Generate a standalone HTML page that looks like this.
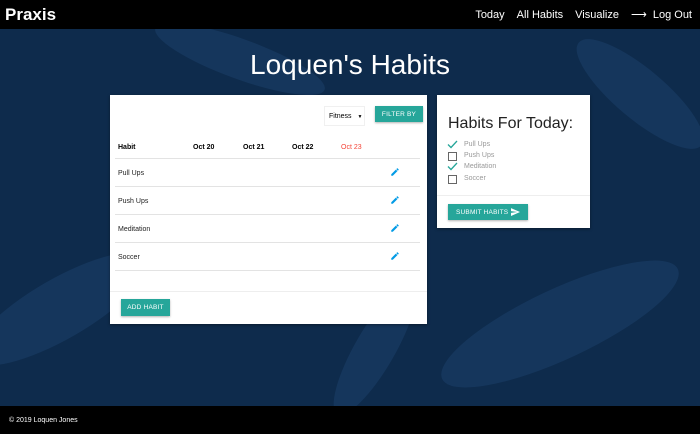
<!DOCTYPE html>
<html><head><meta charset="utf-8"><style>
*{margin:0;padding:0;box-sizing:border-box}
body{width:700px;height:434px;overflow:hidden;font-family:"Liberation Sans",sans-serif;background:#0e2b4c;position:relative}
.nav{position:absolute;top:0;left:0;width:700px;height:29px;background:#000;color:#fff}
.brand{position:absolute;left:5px;top:5px;font-size:17px;font-weight:bold}
.links{position:absolute;right:8px;top:8px;font-size:11px}
.links span{margin-left:12px}
.bg{position:absolute;top:29px;left:0;width:700px;height:377px;overflow:hidden}
.leaf{position:absolute;background:#1f4470;border-radius:50%;opacity:.45}
h1{position:absolute;top:49px;width:700px;text-align:center;color:#fff;font-weight:normal;font-size:28px}
.card{position:absolute;background:#fff;box-shadow:0 1px 3px rgba(0,0,0,.4)}
.btn{position:absolute;background:#26a69a;color:#fff;font-size:6.5px;text-align:center;letter-spacing:.2px;box-shadow:0 1px 2px rgba(0,0,0,.3)}
.row{position:absolute;left:5px;width:305px;border-bottom:1px solid #e3e3e3;font-size:7px;color:#222}
.row span{position:absolute;left:3px}
.pen{position:absolute;left:275px}
.hd{position:absolute;top:49px;font-size:7px;font-weight:bold}
.foot{position:absolute;bottom:0;left:0;width:700px;height:28px;background:#000;color:#fff;font-size:7px;padding:11px 0 0 9px}
.ci{position:absolute;left:11px;font-size:7px;color:#999}
.ci span{position:absolute;left:16px;top:0;white-space:nowrap}
.box{position:absolute;left:0;top:0;width:9px;height:9px;border:1.5px solid #666}
</style></head><body>
<div class="bg">
<div class="leaf" style="left:-40px;top:250px;width:200px;height:60px;transform:rotate(-30deg)"></div>
<div class="leaf" style="left:430px;top:260px;width:260px;height:70px;transform:rotate(-25deg)"></div>
<div class="leaf" style="left:560px;top:40px;width:160px;height:50px;transform:rotate(40deg)"></div>
<div class="leaf" style="left:150px;top:10px;width:180px;height:40px;transform:rotate(20deg)"></div>
<div class="leaf" style="left:300px;top:300px;width:150px;height:40px;transform:rotate(-60deg)"></div>
</div>
<div class="nav"><div class="brand">Praxis</div><div class="links"><span>Today</span><span>All Habits</span><span>Visualize</span><span>&#10230;&nbsp; Log Out</span></div></div>
<h1>Loquen's Habits</h1>
<div class="card" style="left:110px;top:95px;width:317px;height:229px">
<div style="position:absolute;left:214px;top:11px;width:41px;height:20px;border:1px solid #f0f0f0;font-size:7px;padding:6px 0 0 4px">Fitness <span style="font-size:5px;margin-left:4px">▼</span></div>
<div class="btn" style="left:265px;top:11px;width:48px;height:16px;padding-top:5px">FILTER BY</div>
<div class="hd" style="left:8px">Habit</div>
<div class="hd" style="left:83px">Oct 20</div>
<div class="hd" style="left:133px">Oct 21</div>
<div class="hd" style="left:182px">Oct 22</div>
<div class="hd" style="left:231px;color:#f44336;font-weight:normal">Oct 23</div>
<div class="row" style="top:36px;height:28px"></div>
<div class="row" style="top:64px;height:28px"><span style="top:11px">Pull Ups</span><svg class="pen" style="top:8px" width="10" height="10" viewBox="0 0 24 24"><path fill="#039be5" d="M3 17.25V21h3.75L17.8 9.94l-3.75-3.75L3 17.25zM20.7 7.04a1 1 0 000-1.41l-2.34-2.34a1 1 0 00-1.41 0l-1.830 1.83 3.75 3.75 1.83-1.83z"/></svg></div>
<div class="row" style="top:92px;height:28px"><span style="top:11px">Push Ups</span><svg class="pen" style="top:8px" width="10" height="10" viewBox="0 0 24 24"><path fill="#039be5" d="M3 17.25V21h3.75L17.8 9.94l-3.75-3.75L3 17.25zM20.7 7.04a1 1 0 000-1.41l-2.34-2.34a1 1 0 00-1.41 0l-1.83 1.83 3.75 3.75 1.83-1.83z"/></svg></div>
<div class="row" style="top:120px;height:28px"><span style="top:11px">Meditation</span><svg class="pen" style="top:8px" width="10" height="10" viewBox="0 0 24 24"><path fill="#039be5" d="M3 17.25V21h3.75L17.8 9.94l-3.75-3.75L3 17.25zM20.7 7.04a1 1 0 000-1.41l-2.34-2.34a1 1 0 00-1.41 0l-1.83 1.83 3.75 3.75 1.83-1.83z"/></svg></div>
<div class="row" style="top:148px;height:28px"><span style="top:11px">Soccer</span><svg class="pen" style="top:8px" width="10" height="10" viewBox="0 0 24 24"><path fill="#039be5" d="M3 17.25V21h3.75L17.8 9.94l-3.75-3.75L3 17.25zM20.7 7.04a1 1 0 000-1.41l-2.34-2.34a1 1 0 00-1.41 0l-1.83 1.83 3.75 3.75 1.83-1.83z"/></svg></div>
<div style="position:absolute;left:0;top:196px;width:317px;border-top:1px solid #eee"></div>
<div class="btn" style="left:11px;top:204px;width:49px;height:17px;padding-top:5px">ADD HABIT</div>
</div>
<div class="card" style="left:437px;top:95px;width:153px;height:133px">
<div style="position:absolute;left:11px;top:20px;font-size:16px;color:#222">Habits For Today:</div>
<div class="ci" style="top:46px"><svg width="11" height="9" viewBox="0 0 11 9" style="position:absolute;left:-1px;top:-1px"><path d="M1 4.5l3 3L10 1" stroke="#26a69a" stroke-width="1.3" fill="none"/></svg><span>Pull Ups</span></div>
<div class="ci" style="top:57px"><div class="box"></div><span>Push Ups</span></div>
<div class="ci" style="top:68px"><svg width="11" height="9" viewBox="0 0 11 9" style="position:absolute;left:-1px;top:-1px"><path d="M1 4.5l3 3L10 1" stroke="#26a69a" stroke-width="1.3" fill="none"/></svg><span>Meditation</span></div>
<div class="ci" style="top:80px"><div class="box"></div><span>Soccer</span></div>
<div style="position:absolute;left:0;top:100px;width:153px;border-top:1px solid #eee"></div>
<div class="btn" style="left:11px;top:109px;width:80px;height:16px;padding:5px 0 0 8px;text-align:left">SUBMIT HABITS<svg style="position:absolute;right:8px;top:4px" width="9" height="8" viewBox="0 0 24 21"><path fill="#fff" d="M0 21l24-10.5L0 0v8.2l17 2.3-17 2.3z"/></svg></div>
</div>
<div class="foot">© 2019 Loquen Jones</div>
</body></html>
